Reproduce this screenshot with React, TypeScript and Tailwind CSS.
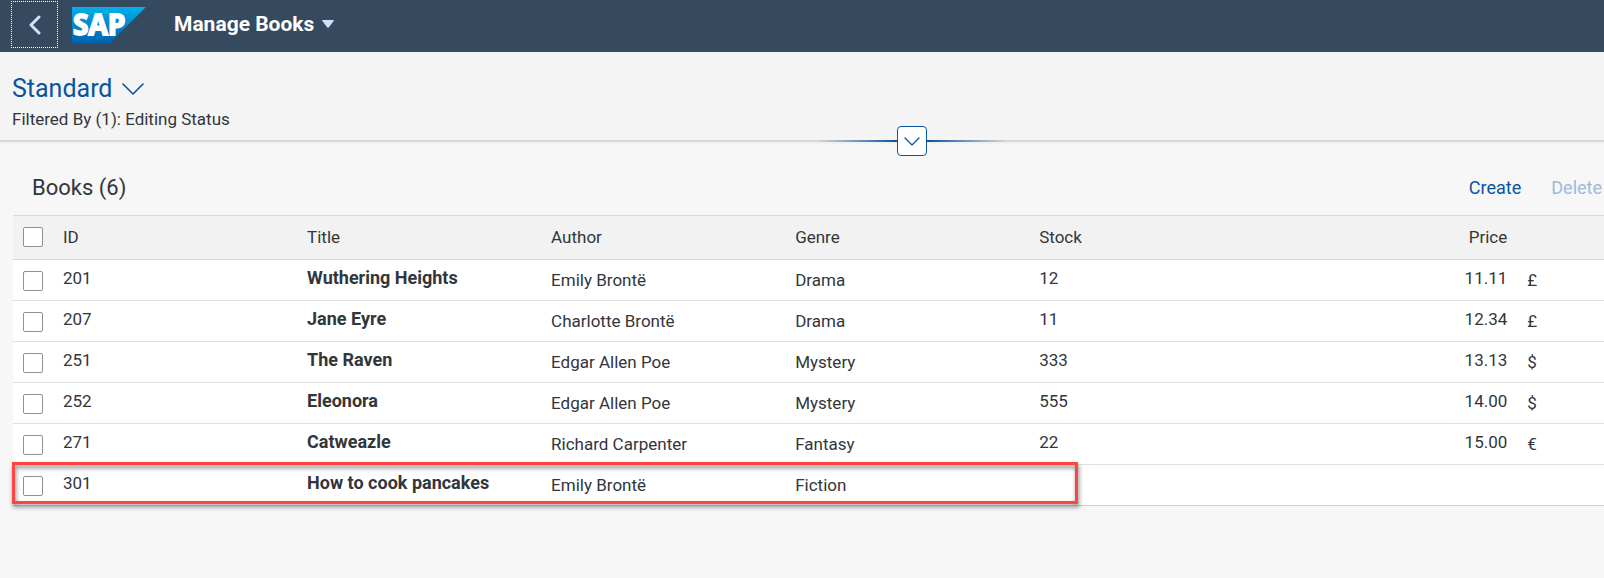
type Book = {
  id: string;
  title: string;
  author: string;
  genre: string;
  stock: string;
  price: string;
  currency: string;
};

const books: Book[] = [
  { id: '201', title: 'Wuthering Heights', author: 'Emily Brontë', genre: 'Drama', stock: '12', price: '11.11', currency: '£' },
  { id: '207', title: 'Jane Eyre', author: 'Charlotte Brontë', genre: 'Drama', stock: '11', price: '12.34', currency: '£' },
  { id: '251', title: 'The Raven', author: 'Edgar Allen Poe', genre: 'Mystery', stock: '333', price: '13.13', currency: '$' },
  { id: '252', title: 'Eleonora', author: 'Edgar Allen Poe', genre: 'Mystery', stock: '555', price: '14.00', currency: '$' },
  { id: '271', title: 'Catweazle', author: 'Richard Carpenter', genre: 'Fantasy', stock: '22', price: '15.00', currency: '€' },
  { id: '301', title: 'How to cook pancakes', author: 'Emily Brontë', genre: 'Fiction', stock: '', price: '', currency: '' },
];

function SapLogo() {
  return (
    <svg width="74" height="36" viewBox="0 0 74 36" role="img" aria-label="SAP" className="overflow-visible">
      <defs>
        <linearGradient id="sap-blue" x1="0" y1="0" x2="0" y2="1">
          <stop offset="0" stopColor="#00b1eb" />
          <stop offset="0.4" stopColor="#0090d3" />
          <stop offset="1" stopColor="#0062b4" />
        </linearGradient>
      </defs>
      <path d="M0 0H74L38 36H0Z" fill="url(#sap-blue)" />
      <text x="1" y="28" fill="#fff" stroke="#fff" strokeWidth="1.8" className="font-['Open_Sans',sans-serif] text-[28px] font-bold">
        SAP
      </text>
    </svg>
  );
}

function ShellBar() {
  return (
    <header className="flex h-[52px] items-center bg-[#354a5f] pl-[11px]">
      <button type="button" aria-label="Back" className="mb-[3px] flex size-[47px] items-center justify-center border border-dotted border-white">
        <svg width="12" height="20" viewBox="0 0 12 20" fill="none" stroke="#d1e0ff" strokeWidth="3" strokeLinecap="round" strokeLinejoin="round">
          <path d="M10 2L2 10L10 18" />
        </svg>
      </button>
      <a href="#home" className="mb-[2px] ml-[14px]">
        <SapLogo />
      </a>
      <button type="button" className="mb-1 ml-7 flex items-center gap-2 text-[21px] leading-7 font-bold text-white">
        Manage Books
        <svg width="12" height="8" viewBox="0 0 12 8" fill="#d1e0ff">
          <path d="M0.6 0H11.4Q12.3 0 11.8 0.8L6.7 7.4Q6 8.2 5.3 7.4L0.2 0.8Q-0.3 0 0.6 0Z" />
        </svg>
      </button>
    </header>
  );
}

function FilterBar() {
  return (
    <section className="relative h-[90px] border-b-2 border-[#d9d9d9] bg-[#f4f4f4] px-3 pt-[21px] shadow-[0_1px_2px_#0000000d]">
      <button type="button" className="flex items-center gap-[10px] text-[25px] leading-8 text-[#0854a0]">
        Standard
        <svg width="22" height="12" viewBox="0 0 22 12" fill="none" stroke="#0854a0" strokeWidth="1.6" strokeLinecap="round" strokeLinejoin="round">
          <path d="M1 1L11 11L21 1" />
        </svg>
      </button>
      <p className="text-[17px] leading-7 text-[#32363a]">Filtered By (1): Editing Status</p>
      <div className="absolute inset-x-0 -bottom-4 flex items-center justify-center pl-[220px]">
        <span className="h-[2px] w-20 bg-linear-to-r from-transparent to-[#0854a0]" />
        <button type="button" aria-label="Expand header" className="flex size-[30px] items-center justify-center rounded-[4px] border border-[#0854a0] bg-white">
          <svg width="16" height="9" viewBox="0 0 16 9" fill="none" stroke="#0854a0" strokeWidth="1.3" strokeLinecap="round" strokeLinejoin="round">
            <path d="M1 1L8 8L15 1" />
          </svg>
        </button>
        <span className="h-[2px] w-20 bg-linear-to-l from-transparent to-[#0854a0]" />
      </div>
    </section>
  );
}

function CheckBox({ label }: { label: string }) {
  return (
    <input
      type="checkbox"
      aria-label={label}
      className="block size-5 appearance-none rounded-[2px] border border-[#89919a] bg-white checked:bg-[#0854a0]"
    />
  );
}

function BookTable() {
  return (
    <div className="relative ml-[13px]">
      <table className="w-full table-fixed border-collapse text-left text-[17px] leading-6 text-[#32363a]">
        <colgroup>
          <col className="w-[42px]" />
          <col className="w-[15.34%]" />
          <col className="w-[15.34%]" />
          <col className="w-[15.34%]" />
          <col className="w-[15.34%]" />
          <col className="w-[15.34%]" />
          <col className="w-[15.34%]" />
          <col />
        </colgroup>
        <thead>
          <tr className="h-11 border-y border-[#d9d9d9] bg-[#f2f2f2]">
            <th className="pb-[2px] pl-[10px]"><CheckBox label="Select all books" /></th>
            <th className="px-2 pb-[2px] font-normal">ID</th>
            <th className="px-2 pb-[2px] font-normal">Title</th>
            <th className="px-2 pb-[2px] font-normal">Author</th>
            <th className="px-2 pb-[2px] font-normal">Genre</th>
            <th className="px-2 pb-[2px] font-normal">Stock</th>
            <th className="pr-3 pb-[2px] text-right font-normal">Price</th>
            <th aria-label="Currency" />
          </tr>
        </thead>
        <tbody>
          {books.map((book) => (
            <tr key={book.id} className="h-[41px] border-b border-[#e0e0e0] bg-white last:border-[#d0d0d0]">
              <td className="pt-[2px] pl-[10px]"><CheckBox label={`Select ${book.title}`} /></td>
              <td className="px-2 pb-1">{book.id}</td>
              <td className="px-2 pb-1 text-lg leading-6 font-bold">{book.title}</td>
              <td className="px-2">{book.author}</td>
              <td className="px-2">{book.genre}</td>
              <td className="px-2 pb-1">{book.stock}</td>
              <td className="pr-3 pb-1 text-right">{book.price}</td>
              <td className="pl-2">{book.currency}</td>
            </tr>
          ))}
        </tbody>
      </table>
      <div className="pointer-events-none absolute bottom-[2px] -left-px h-[42px] w-[67%] border-3 border-[#ff4444] drop-shadow-[1px_3px_2px_#00000080]" />
    </div>
  );
}

export default function App() {
  return (
    <div className="min-h-screen overflow-x-hidden bg-[#f7f7f7] font-[Roboto,sans-serif]">
      <ShellBar />
      <FilterBar />
      <main>
        <div className="flex h-[73px] items-center pt-[18px] pl-8">
          <h1 className="grow text-[22px] text-[#32363a]">Books (6)</h1>
          <div className="flex gap-[30px] pr-[2px] text-lg">
            <button type="button" className="text-[#0854a0]">Create</button>
            <button type="button" disabled className="text-[#9cbbd9]">Delete</button>
          </div>
        </div>
        <BookTable />
      </main>
    </div>
  );
}
